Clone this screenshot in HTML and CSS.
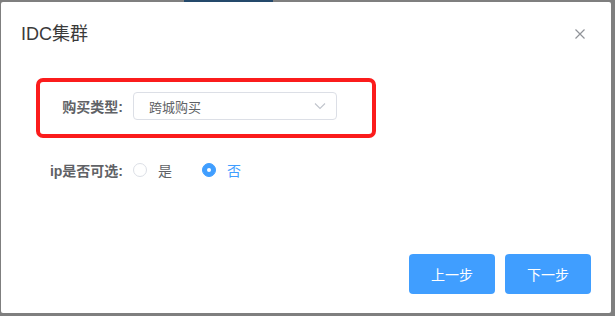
FILE: index.html
```html
<!DOCTYPE html>
<html lang="zh-CN">
<head>
<meta charset="UTF-8">
<title>IDC集群</title>
<link rel="stylesheet" href="styles.css">
</head>
<body>
<div class="page-strip"><span class="page-tab"></span></div>
<div class="dialog">
    <div class="dialog-header">
        <span class="dialog-title">IDC集群</span>
        <svg class="dialog-close" width="12" height="12" viewBox="0 0 12 12">
            <path d="M1.5 1.5 L10.5 10.5 M10.5 1.5 L1.5 10.5" stroke="#909399" stroke-width="1.2" fill="none"/>
        </svg>
    </div>
    <div class="dialog-body">
        <div class="form-item highlight">
            <label class="form-label">购买类型:</label>
            <div class="select">
                <span>跨城购买</span>
                <svg width="12" height="8" viewBox="0 0 12 8">
                    <path d="M1 1.5 L6 6.5 L11 1.5" stroke="#c0c4cc" stroke-width="1.1" fill="none"/>
                </svg>
            </div>
        </div>
        <div class="form-item">
            <label class="form-label">ip是否可选:</label>
            <div class="radio-group">
                <label class="radio"><span class="radio-dot"></span><span class="radio-text">是</span></label>
                <label class="radio checked"><span class="radio-dot"></span><span class="radio-text">否</span></label>
            </div>
        </div>
    </div>
    <div class="dialog-footer">
        <button type="button" class="btn">上一步</button>
        <button type="button" class="btn">下一步</button>
    </div>
</div>
</body>
</html>
```

FILE: styles.css
```css
body, html {
    margin: 0;
    padding: 0;
    background: #7f7f7f;
    font-family: "Liberation Sans", "Noto Sans CJK SC", sans-serif;
    width: 615px;
    height: 316px;
    overflow: hidden;
}
.page-strip {
    height: 2px;
    display: flex;
}
.page-tab {
    margin-left: 184px;
    width: 89px;
    height: 2px;
    background: #24496b;
}
.dialog {
    margin-left: 1px;
    width: 610px;
    height: 311px;
    background: #fff;
    border-radius: 2px;
    display: flex;
    flex-direction: column;
    box-sizing: border-box;
}
.dialog-header {
    padding: 20px 25px 10px 20px;
    display: flex;
    justify-content: space-between;
    align-items: center;
}
.dialog-title {
    font-size: 18px;
    line-height: 24px;
    color: #3a3a3a;
}
.dialog-body {
    padding: 26px 0 0 39px;
}
.form-item {
    display: flex;
    align-items: center;
    width: 332px;
}
.highlight {
    padding: 10px 0 14px;
    outline: 4px solid #fb1c1c;
    border-radius: 3px;
}
.form-item + .form-item {
    margin-top: 22px;
    height: 28px;
}
.form-label {
    width: 93px;
    box-sizing: border-box;
    padding-right: 10px;
    text-align: right;
    font-size: 14px;
    font-weight: 600;
    color: #606266;
    white-space: nowrap;
}
.select {
    width: 204px;
    height: 28px;
    box-sizing: border-box;
    border: 1px solid #dcdfe6;
    border-radius: 4px;
    display: flex;
    align-items: center;
    justify-content: space-between;
    padding: 0 10px 0 15px;
    font-size: 13px;
    color: #606266;
}
.radio-group {
    display: flex;
    align-items: center;
}
.radio {
    display: flex;
    align-items: center;
    margin-right: 30px;
    font-size: 14px;
    color: #606266;
}
.radio-dot {
    width: 14px;
    height: 14px;
    box-sizing: border-box;
    border: 1px solid #dcdfe6;
    border-radius: 50%;
    position: relative;
}
.radio-text {
    padding-left: 11px;
}
.radio.checked {
    color: #409eff;
}
.radio.checked .radio-dot {
    background: #409eff;
    border-color: #409eff;
}
.radio.checked .radio-dot::after {
    content: "";
    position: absolute;
    left: 4px;
    top: 4px;
    width: 4px;
    height: 4px;
    border-radius: 50%;
    background: #fff;
}
.dialog-footer {
    margin-top: auto;
    padding: 0 20px 19px;
    display: flex;
    justify-content: flex-end;
    gap: 10px;
}
.btn {
    width: 86px;
    height: 40px;
    border: none;
    border-radius: 4px;
    background: #409eff;
    color: #fff;
    font-family: "Noto Sans CJK SC", sans-serif;
    font-size: 14px;
    cursor: pointer;
}
```
